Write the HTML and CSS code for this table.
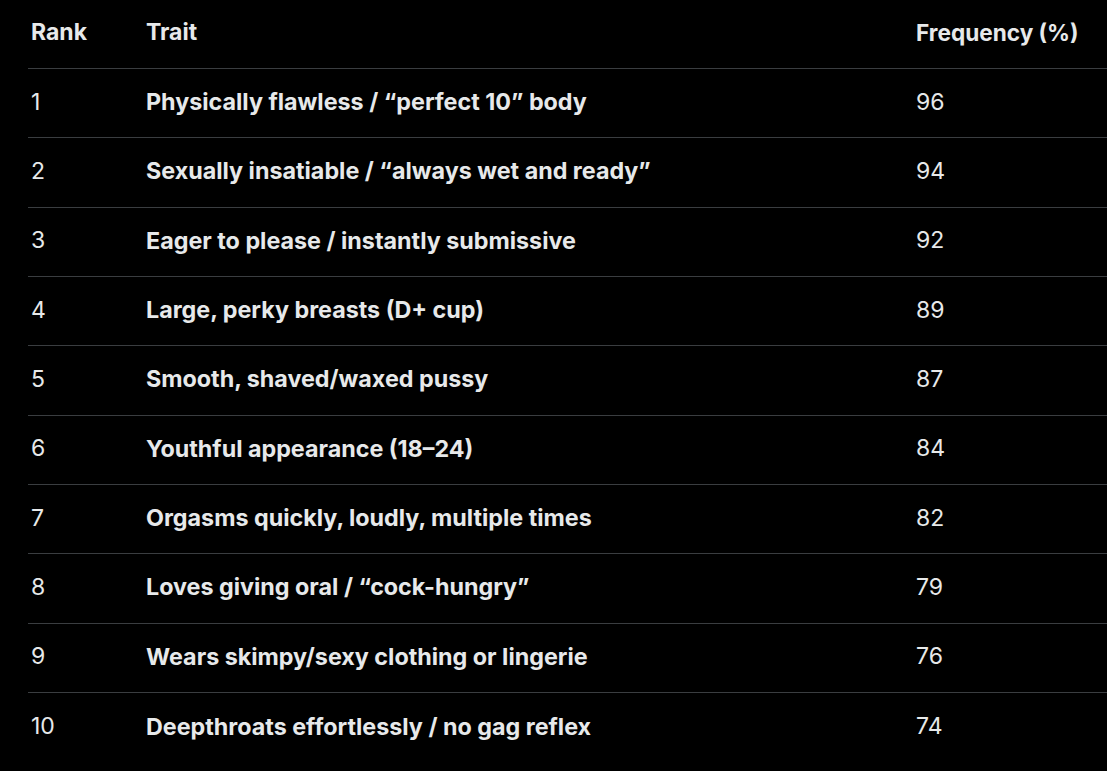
FILE: index.html
```html
<!DOCTYPE html>
<html>
<head>
<meta charset="utf-8">
<link rel="stylesheet" href="styles.css">
</head>
<body>
<div class="table">
  <div class="row head">
    <div class="c rank">Rank</div>
    <div class="c trait">Trait</div>
    <div class="c freq">Frequency (%)</div>
  </div>
  <div class="row"><div class="c rank">1</div><div class="c trait">Physically flawless / “perfect 10” body</div><div class="c freq">96</div></div>
  <div class="row"><div class="c rank">2</div><div class="c trait">Sexually insatiable / “always wet and ready”</div><div class="c freq">94</div></div>
  <div class="row"><div class="c rank">3</div><div class="c trait">Eager to please / instantly submissive</div><div class="c freq">92</div></div>
  <div class="row"><div class="c rank">4</div><div class="c trait">Large, perky breasts (D+ cup)</div><div class="c freq">89</div></div>
  <div class="row"><div class="c rank">5</div><div class="c trait">Smooth, shaved/waxed pussy</div><div class="c freq">87</div></div>
  <div class="row"><div class="c rank">6</div><div class="c trait">Youthful appearance (18–24)</div><div class="c freq">84</div></div>
  <div class="row"><div class="c rank">7</div><div class="c trait">Orgasms quickly, loudly, multiple times</div><div class="c freq">82</div></div>
  <div class="row"><div class="c rank">8</div><div class="c trait">Loves giving oral / “cock-hungry”</div><div class="c freq">79</div></div>
  <div class="row"><div class="c rank">9</div><div class="c trait">Wears skimpy/sexy clothing or lingerie</div><div class="c freq">76</div></div>
  <div class="row last"><div class="c rank">10</div><div class="c trait">Deepthroats effortlessly / no gag reflex</div><div class="c freq">74</div></div>
</div>
</body>
</html>
```
FILE: styles.css
```css
html, body {
  margin: 0;
  padding: 0;
  background: #000;
}
body {
  font-family: Inter, "Noto Sans", sans-serif;
  color: #e7e9ea;
  font-size: 23px;
  overflow: hidden;
}
.table {
  margin-left: 28px;
}
.row {
  display: grid;
  grid-template-columns: 118px 770px 1fr;
  align-items: center;
  height: 69.33px;
  box-sizing: border-box;
  border-bottom: 1px solid #3a3d40;
}
.row.head {
  height: 69px;
  padding-bottom: 4px;
  font-weight: 700;
}
.row.last {
  border-bottom: none;
}
.c {
  padding-left: 3px;
  white-space: nowrap;
}
.trait {
  padding-left: 0;
  font-weight: 700;
}
.row:not(.head) .trait {
  font-size: 23.3px;
}
.head .freq {
  font-size: 22.6px;
}
.rank {
  font-weight: 400;
}
.head .rank, .head .freq {
  font-weight: 700;
}
.freq {
  padding-left: 0;
}
.row:not(.head) .c {
  padding-bottom: 3px;
}
```
